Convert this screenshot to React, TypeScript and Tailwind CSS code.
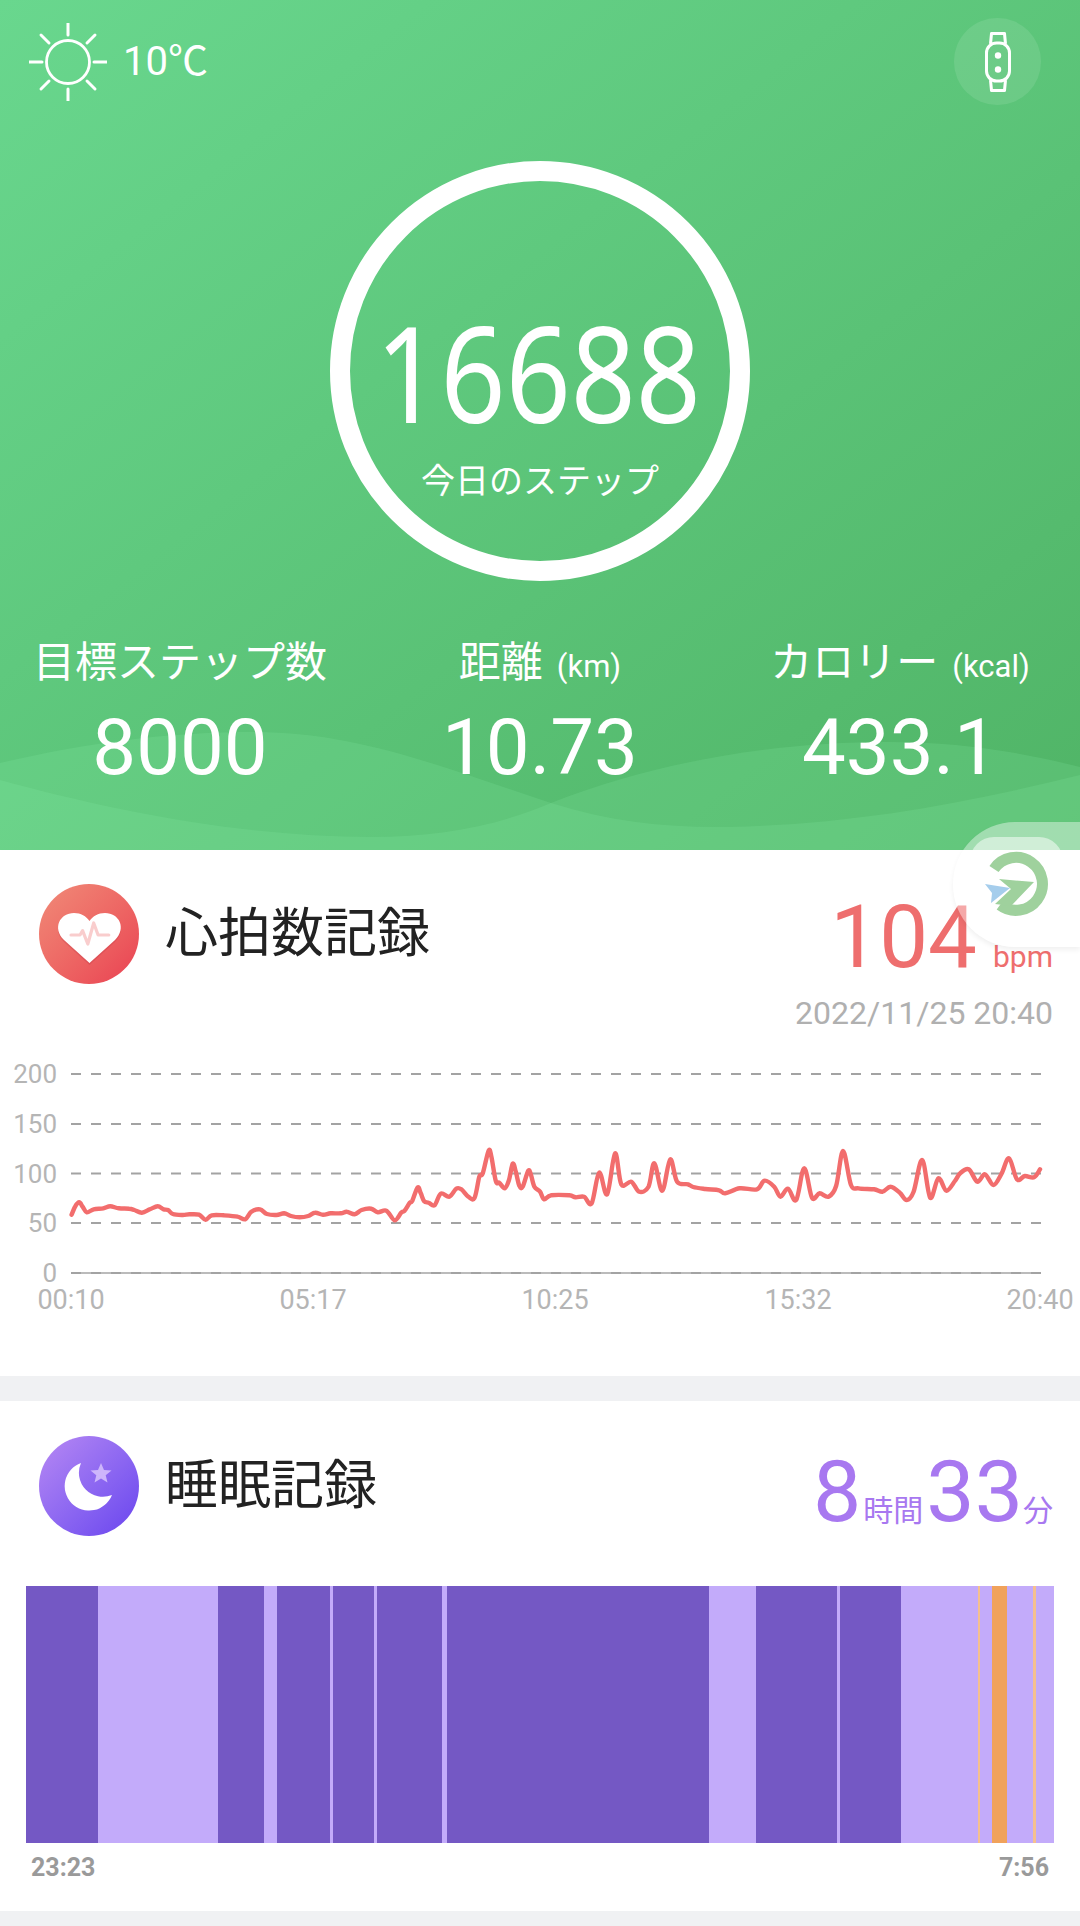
import React from 'react';

// heart rate samples, read off the chart as [x, y] px relative to the chart box
const SX = 2.904;
const rawLeft = [
  [208,524],[218,500],[230,487],[240,500],[252,517],[272,508],[300,505],[320,499],[345,505],[375,506],[390,510],[412,518],[435,508],[458,499],[475,508],[488,510],[502,522],[530,525],[550,523],[578,524],[597,539],[615,526],[650,526],[690,530],[712,538],[730,515],[755,508],[775,522],[803,525],[825,520],[845,528],[870,532],[895,528],[915,518],[938,524],[960,520],[990,520],[1007,515],[1030,523],[1050,510],[1078,506],[1097,517],[1122,512],[1146,541],[1165,518],[1175,512],[1190,488],[1197,483],[1213,442],[1222,460],[1232,484],[1245,488],[1262,496],[1280,461],[1305,470],[1325,446],[1340,448],[1360,470],[1378,474],[1392,410],[1402,400],[1419,332],[1427,350],[1440,424],[1450,428],[1466,445],[1478,420],[1489,371],[1498,395],[1508,437],[1518,440],[1534,392],[1542,405],[1552,440],
];
const rawRight = [
  [0,455],[12,478],[32,466],[85,466],[103,472],[128,470],[150,490],[172,398],[195,463],[218,340],[236,433],[265,425],[288,455],[315,440],[332,370],[355,452],[378,358],[398,425],[430,433],[445,441],[480,447],[520,451],[538,460],[580,445],[630,448],[652,422],[680,440],[698,470],[720,446],[744,480],[767,385],[790,473],[812,460],[838,470],[860,438],[880,333],[903,435],[925,445],[970,448],[995,455],[1018,440],[1045,458],[1065,480],[1085,455],[1110,360],[1133,473],[1157,415],[1180,452],[1205,423],[1220,400],[1245,388],[1270,425],[1292,403],[1317,435],[1340,402],[1362,355],[1385,418],[1408,408],[1435,412],[1452,388],
];
const pts = [
  ...rawLeft.map(([x, y]) => [x / SX, y / 3]),
  ...rawRight.map(([x, y]) => [540 + x / SX, y / 3]),
];

function smoothPath(p: number[][]) {
  let d = `M${p[0][0].toFixed(1)} ${p[0][1].toFixed(1)}`;
  for (let i = 0; i < p.length - 1; i++) {
    const a = p[Math.max(i - 1, 0)];
    const b = p[i];
    const c = p[i + 1];
    const e = p[Math.min(i + 2, p.length - 1)];
    const c1x = b[0] + (c[0] - a[0]) / 6;
    const c1y = b[1] + (c[1] - a[1]) / 6;
    const c2x = c[0] - (e[0] - b[0]) / 6;
    const c2y = c[1] - (e[1] - b[1]) / 6;
    d += ` C${c1x.toFixed(1)} ${c1y.toFixed(1)} ${c2x.toFixed(1)} ${c2y.toFixed(1)} ${c[0].toFixed(1)} ${c[1].toFixed(1)}`;
  }
  return d;
}

const yTicks = [
  { label: '200', y: 34 },
  { label: '150', y: 84 },
  { label: '100', y: 133.5 },
  { label: '50', y: 183 },
  { label: '0', y: 233 },
];
const xTicks = [
  { label: '00:10', x: 71 },
  { label: '05:17', x: 313 },
  { label: '10:25', x: 555 },
  { label: '15:32', x: 798 },
  { label: '20:40', x: 1040 },
];

const D = 'bg-[#7458c4]';
const L = 'bg-[#c3abfa]';
const O = 'bg-[#f0a25b]';
const T = 'bg-[#f5c08e]';
const sleepSegments = [
  { w: 72, c: D }, { w: 120, c: L }, { w: 46, c: D }, { w: 13, c: L }, { w: 53, c: D },
  { w: 3, c: L }, { w: 41, c: D }, { w: 3, c: L }, { w: 65, c: D }, { w: 5, c: L },
  { w: 262, c: D }, { w: 47, c: L }, { w: 81, c: D }, { w: 3, c: L }, { w: 61, c: D },
  { w: 77, c: L }, { w: 2, c: T }, { w: 12, c: L }, { w: 15, c: O }, { w: 26, c: L },
  { w: 3, c: T }, { w: 18, c: L },
];

function SunIcon() {
  const rays = [
    [68, 23, 68, 35], [68, 89, 68, 101], [29, 62, 42, 62], [94, 62, 107, 62],
    [41, 35, 49, 43], [87, 81, 95, 89], [95, 35, 87, 43], [41, 89, 49, 81],
  ];
  return (
    <svg width="78" height="78" viewBox="29 23 78 78" fill="none" stroke="white" strokeLinecap="round">
      <circle cx="68" cy="62" r="21.5" strokeWidth="2.8" />
      {rays.map((r, i) => (
        <line key={i} x1={r[0]} y1={r[1]} x2={r[2]} y2={r[3]} strokeWidth="3" />
      ))}
    </svg>
  );
}

function BandIcon() {
  return (
    <svg width="28" height="62" viewBox="0 0 28 62" fill="none" stroke="white" strokeWidth="3" strokeLinejoin="round">
      <rect x="2.5" y="12" width="23" height="38" rx="10" />
      <path d="M6.5 13 L7.5 2.5 H20.5 L21.5 13" />
      <path d="M6.5 49 L7.5 59.5 H20.5 L21.5 49" />
      <circle cx="14" cy="24.5" r="3.2" fill="white" stroke="none" />
      <circle cx="14" cy="38.5" r="3.2" fill="white" stroke="none" />
    </svg>
  );
}

function HeartIcon() {
  return (
    <div className="w-[100px] h-[100px] rounded-full bg-linear-to-br from-[#f08a78] to-[#e93f52] shrink-0">
      <svg width="100" height="100" viewBox="0 0 100 100">
        <path
          d="M50.5 79 L25 56 C13 44 21 29 35 29 C42 29 47 32 50.5 37 C54 32 59 29 66 29 C80 29 88 44 76 56 Z"
          fill="#b92f3f"
          opacity="0.25"
          transform="translate(0 2)"
        />
        <path
          d="M50.5 79 L25 56 C13 44 21 29 35 29 C42 29 47 32 50.5 37 C54 32 59 29 66 29 C80 29 88 44 76 56 Z"
          fill="white"
        />
        <path
          d="M32 51 H41 L43.6 46.7 L48.8 60 L54.7 39 L59.1 51 H69.8"
          fill="none"
          stroke="#f9cdcd"
          strokeWidth="3.2"
          strokeLinecap="round"
          strokeLinejoin="round"
        />
      </svg>
    </div>
  );
}

function MoonIcon() {
  return (
    <div className="w-[100px] h-[100px] rounded-full bg-linear-to-br from-[#b888f3] to-[#6a42ee] shrink-0">
      <svg width="100" height="100" viewBox="0 0 100 100">
        <path d="M42 27 A24.5 24.5 0 1 0 73 59 A24 24 0 0 1 42 27 Z" fill="white" />
        <polygon
          points="62,27 65,34 72.5,34.5 66.7,39.3 68.5,46.5 62,42.6 55.5,46.5 57.3,39.3 51.5,34.5 59,34"
          fill="#cdb5fb"
        />
      </svg>
    </div>
  );
}

// the half-faded floating launcher on the right edge
function FloatingWidget() {
  return (
    <div className="absolute left-[953px] top-[822px] w-[127px] h-[125px] rounded-l-[62px] bg-white/40 shadow-[0_3px_5px_rgba(0,0,0,0.06)] flex items-center">
      <div className="ml-[17px] w-[93px] h-[95px] rounded-[24px] bg-white/50">
        <svg width="93" height="95" viewBox="970 837 93 95">
          <path d="M994 869 A26.5 26.5 0 1 1 1000 905" fill="none" stroke="#9fd19d" strokeWidth="11" />
          <polygon points="999,879 1034,882 1011,906 995,904 1011,889" fill="#9fd19d" />
          <polygon points="985,884 1010,888 991,903 992,893" fill="#a5cdec" />
        </svg>
      </div>
    </div>
  );
}

export default function App() {
  return (
    <div className="relative w-[1080px] h-[1926px] overflow-hidden bg-[#f0f1f3] [font-family:Roboto,'Noto_Sans_CJK_JP',sans-serif]">
      {/* Steps hero */}
      <section className="relative h-[850px] bg-linear-to-br from-[#69d78e] to-[#50b466] text-white overflow-hidden">
        <svg className="absolute left-0 top-[700px]" width="1080" height="150" viewBox="0 700 1080 150">
          <path
            d="M0 763 C90 742 170 732 255 732 C360 732 450 770 551 803 C610 822 670 828 730 827 C850 824 960 805 1080 775 V850 H0 Z"
            fill="#8ff0ae"
            fillOpacity="0.16"
          />
          <path
            d="M0 780 C110 810 240 837 372 837 C440 837 500 825 551 803 C660 760 780 742 888 742 C960 742 1020 752 1080 767 V850 H0 Z"
            fill="#8ff0ae"
            fillOpacity="0.16"
          />
        </svg>

        <div className="relative flex items-start justify-between pl-[29px] pr-[39px] pt-[18px] h-[105px]">
          <div className="flex items-center gap-[16px] pt-[5px]">
            <SunIcon />
            <span className="text-[40px] leading-[48px]">10℃</span>
          </div>
          <div className="w-[87px] h-[87px] rounded-full bg-white/10 flex items-center justify-center">
            <BandIcon />
          </div>
        </div>

        <div className="relative mx-auto mt-[56px] w-[420px] h-[420px] rounded-full border-[20px] border-white flex flex-col items-center">
          <div className="mt-[126px] h-[130px] ml-[-3px] text-[133px] leading-[130px] scale-x-[0.855] [font-family:'Noto_Sans',sans-serif]">
            16688
          </div>
          <div className="mt-[24px] text-[34px] leading-[40px] text-white">今日のステップ</div>
        </div>

        <div className="relative grid grid-cols-3 mt-[57px] text-center">
          {[
            { label: '目標ステップ数', unit: '', value: '8000' },
            { label: '距離', unit: '(km)', value: '10.73' },
            { label: 'カロリー', unit: '(kcal)', value: '433.1' },
          ].map((s) => (
            <div key={s.value}>
              <div className="h-[50px] leading-[50px] text-[42px] whitespace-nowrap">
                {s.label}
                {s.unit && <span className="ml-[14px] text-[31px]">{s.unit}</span>}
              </div>
              <div className="mt-[15px] h-[90px] leading-[90px] text-[78px]">{s.value}</div>
            </div>
          ))}
        </div>
      </section>

      {/* Heart rate */}
      <section className="bg-white h-[526px]">
        <div className="h-[190px] flex items-start justify-between pl-[39px] pr-[27px] pt-[34px]">
          <div className="flex items-center gap-[26px]">
            <HeartIcon />
            <h2 className="text-[53px] leading-[62px] font-normal text-[#222]">心拍数記録</h2>
          </div>
          <div className="flex flex-col items-end">
            <div className="flex items-baseline text-[#ee6e6e] h-[96px] mt-[5px]">
              <span className="text-[87px] leading-[96px]">104</span>
              <span className="ml-[16px] text-[30px]">bpm</span>
            </div>
            <div className="mt-[10px] text-[32px] leading-[36px] text-[#b0b0b0]">2022/11/25 20:40</div>
          </div>
        </div>
        <svg className="block" width="1080" height="300" viewBox="0 0 1080 300">
          {yTicks.map((t) => (
            <g key={t.label}>
              <text x="57" y={t.y + 9} textAnchor="end" fontSize="26" fill="#b5b5b5">
                {t.label}
              </text>
              {t.label === '0' && <line x1="71" x2="1041" y1={t.y} y2={t.y} stroke="#bbb" strokeWidth="2" />}
              <line x1="71" x2="1041" y1={t.y} y2={t.y} stroke="#a3a3a3" strokeWidth="2" strokeDasharray="10 10" />
            </g>
          ))}
          {xTicks.map((t) => (
            <text key={t.label} x={t.x} y="269" textAnchor="middle" fontSize="27" fill="#b5b5b5">
              {t.label}
            </text>
          ))}
          <path d={smoothPath(pts)} fill="none" stroke="#f26d6d" strokeWidth="4.4" strokeLinejoin="round" strokeLinecap="round" />
        </svg>
      </section>

      <div className="h-[25px]" />

      {/* Sleep */}
      <section className="bg-white h-[510px]">
        <div className="h-[185px] flex items-start justify-between pl-[39px] pr-[27px] pt-[35px]">
          <div className="flex items-center gap-[26px]">
            <MoonIcon />
            <h2 className="text-[53px] leading-[62px] font-normal text-[#222]">睡眠記録</h2>
          </div>
          <div className="flex items-baseline text-[#a878f0] mt-[11px] h-[90px]">
            <span className="text-[86px] leading-[90px]">8</span>
            <span className="ml-[2px] text-[30px]">時間</span>
            <span className="ml-[3px] text-[86px] leading-[90px]">33</span>
            <span className="text-[30px]">分</span>
          </div>
        </div>
        <div className="flex h-[257px] ml-[26px] w-[1028px]">
          {sleepSegments.map((s, i) => (
            <div key={i} className={s.c} style={{ width: s.w }} />
          ))}
        </div>
        <div className="flex justify-between pl-[31px] pr-[31px] mt-[11px] text-[25px] leading-[28px] font-bold text-[#9a9a9a]">
          <span>23:23</span>
          <span>7:56</span>
        </div>
      </section>

      <FloatingWidget />
    </div>
  );
}
